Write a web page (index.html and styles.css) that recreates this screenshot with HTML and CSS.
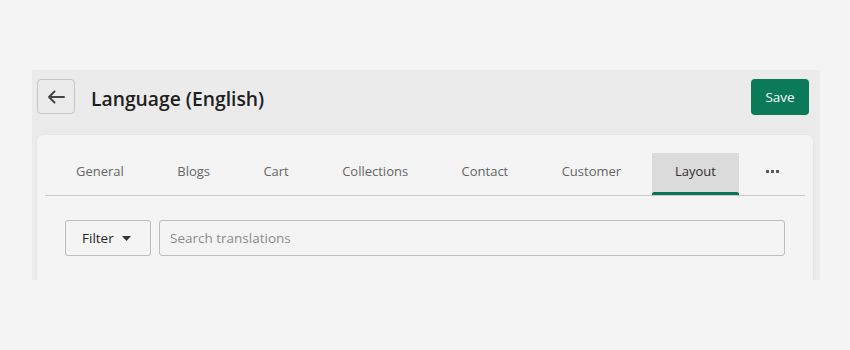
FILE: index.html
```html
<!DOCTYPE html>
<html lang="en">
<head>
<meta charset="utf-8">
<title>Language (English)</title>
<link rel="stylesheet" href="styles.css">
</head>
<body>
<div class="page">
  <section class="panel">
    <header class="header">
      <button class="back" aria-label="Back">
        <svg width="18" height="14" viewBox="0 0 18 14"><path d="M17 7H2M7.5 1.5L2 7l5.5 5.5" fill="none" stroke="#454545" stroke-width="2" stroke-linecap="round" stroke-linejoin="round"/></svg>
      </button>
      <h1 class="title">Language (English)</h1>
      <button class="save">Save</button>
    </header>
    <div class="card">
      <nav class="tabs">
        <span class="tab">General</span>
        <span class="tab">Blogs</span>
        <span class="tab">Cart</span>
        <span class="tab">Collections</span>
        <span class="tab">Contact</span>
        <span class="tab">Customer</span>
        <span class="tab active">Layout</span>
        <span class="tab more"><i></i><i></i><i></i></span>
      </nav>
      <div class="toolbar">
        <button class="filter">Filter <svg width="9" height="5" viewBox="0 0 9 5"><path d="M0 0h9L4.5 5z" fill="#333"/></svg></button>
        <div class="search">Search translations</div>
      </div>
    </div>
  </section>
</div>
</body>
</html>
```
FILE: styles.css
```css
* { box-sizing: border-box; }
html, body { margin: 0; padding: 0; background: #f4f4f4; }
body { font-family: "Open Sans", "Noto Sans", sans-serif; color: #222; }
.page { padding: 70px 30px 0 32px; }
.panel {
  width: 788px;
  height: 210px;
  background: #ebebec;
  overflow: hidden;
}
.header {
  display: flex;
  align-items: center;
  height: 65px;
  padding: 9px 11px 21px 5px;
}
.back {
  width: 38px;
  height: 35px;
  border: 1px solid #c6c6c6;
  border-radius: 4px;
  background: #ebebec;
  display: flex;
  align-items: center;
  justify-content: center;
  padding: 0;
}
.title {
  margin: 3px 0 0 16px;
  font-size: 19.3px;
  font-weight: 600;
  color: #202020;
  flex: 1;
}
.save {
  width: 58px;
  height: 36px;
  border: none;
  border-radius: 4px;
  background: #0b7a57;
  color: #fff;
  font-family: inherit;
  font-size: 13.5px;
  padding: 0;
}
.card {
  margin: 0 7px 0 5px;
  height: 150px;
  background: #f4f4f4;
  border-radius: 6px 6px 0 0;
  padding-top: 18px;
  box-shadow: 0 0 2px rgba(0,0,0,0.08);
}
.tabs {
  display: flex;
  gap: 7.4px;
  margin: 0 8px;
  padding-left: 8px;
  border-bottom: 1px solid #c9c9c9;
  height: 43px;
}
.tab {
  position: relative;
  height: 39px;
  padding: 0 23px 4px;
  display: flex;
  align-items: center;
  font-size: 13px;
  color: #666;
  border-radius: 1px;
}
.tab.active {
  background: #dbdbdb;
  color: #303030;
  padding: 0 23.5px 4px;
}
.tab.active::after {
  content: "";
  position: absolute;
  left: 0;
  right: 0;
  top: 39px;
  height: 3px;
  background: #0b7258;
  border-radius: 2px 2px 0 0;
}
.tab.more { padding: 0 19px 3px; gap: 2px; }
.tab.more i {
  display: block;
  width: 3px;
  height: 3px;
  background: #5a5a5a;
}
.toolbar {
  display: flex;
  gap: 8px;
  padding: 24px 28px 0;
}
.filter {
  width: 86px;
  height: 36px;
  border: 1px solid #bdbdbd;
  border-radius: 3px;
  background: #f4f4f4;
  font-family: inherit;
  font-size: 13.5px;
  color: #262626;
  display: flex;
  align-items: center;
  gap: 8px;
  padding: 0 0 0 16px;
}
.search {
  flex: 1;
  height: 36px;
  border: 1px solid #bdbdbd;
  border-radius: 3px;
  display: flex;
  align-items: center;
  padding-left: 10px;
  font-size: 13.5px;
  color: #8c8c8c;
}
```
